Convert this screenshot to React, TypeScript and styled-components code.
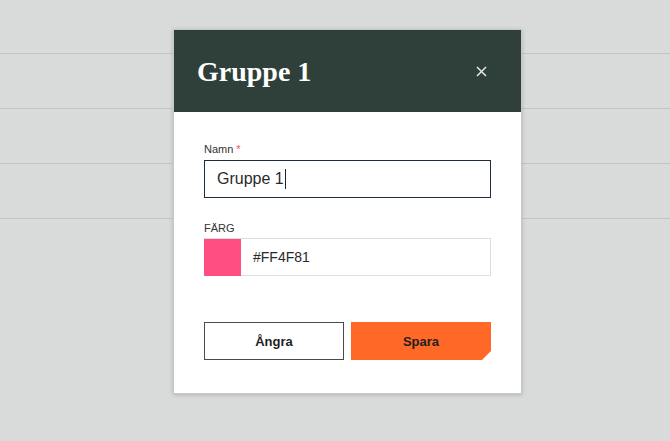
import React from "react";
import styled, { createGlobalStyle } from "styled-components";

const GlobalStyle = createGlobalStyle`
  html, body { margin: 0; padding: 0; }
  body {
    background: #d9dbda;
    font-family: "Liberation Sans", Arial, sans-serif;
    width: 670px;
    height: 441px;
    overflow: hidden;
  }
`;

const Page = styled.div`
  position: relative;
  width: 670px;
  height: 441px;
  background: #d9dbda;
`;

const List = styled.div`
  display: flex;
  flex-direction: column;
`;

const Row = styled.div<{ $first?: boolean }>`
  height: ${(p) => (p.$first ? 53 : 54)}px;
  border-bottom: 1px solid #c3c5c4;
`;

const Dialog = styled.div`
  position: absolute;
  left: 173px;
  top: 29px;
  width: 347px;
  background: #ffffff;
  border: 1px solid #c6c8c7;
  box-shadow: 0 1px 4px rgba(0, 0, 0, 0.18);
  display: flex;
  flex-direction: column;
`;

const Header = styled.div`
  height: 82px;
  background: #2f3f3a;
  display: flex;
  align-items: center;
  justify-content: space-between;
  padding: 0 32px 0 23px;
  box-sizing: border-box;
`;

const Title = styled.h2`
  margin: 0;
  font-family: "Liberation Serif", "Times New Roman", serif;
  font-size: 28px;
  font-weight: 700;
  color: #ffffff;
  letter-spacing: 0;
  margin-top: 2px;
`;

const CloseButton = styled.button`
  border: 0;
  background: transparent;
  padding: 0;
  width: 16px;
  height: 16px;
  display: flex;
  align-items: center;
  justify-content: center;
  cursor: pointer;
`;

const Body = styled.div`
  padding: 30px 30px 33px 30px;
  display: flex;
  flex-direction: column;
`;

const Field = styled.div<{ $mb: number }>`
  display: flex;
  flex-direction: column;
  margin-bottom: ${(p) => p.$mb}px;
`;

const Label = styled.label<{ $mb: number }>`
  font-size: 11px;
  line-height: 14px;
  color: #333;
  margin-bottom: ${(p) => p.$mb}px;
`;

const Required = styled.span`
  color: #f2555a;
  margin-left: 3px;
`;

const TextInput = styled.div`
  height: 38px;
  box-sizing: border-box;
  border: 1.5px solid #1d2c3c;
  display: flex;
  align-items: center;
  padding-left: 12px;
  font-size: 16px;
  color: #2a2a2a;
`;

const Caret = styled.span`
  display: inline-block;
  width: 1px;
  height: 20px;
  background: #222;
  margin-left: 1px;
`;

const ColorField = styled.div`
  height: 38px;
  box-sizing: border-box;
  border: 1px solid #dedede;
  display: flex;
  align-items: stretch;
`;

const Swatch = styled.div<{ $color: string }>`
  width: 37px;
  background: ${(p) => p.$color};
  margin: 0 0 -1px -1px;
`;

const ColorValue = styled.div`
  display: flex;
  align-items: center;
  padding-left: 12px;
  font-size: 14px;
  color: #2a2a2a;
`;

const Actions = styled.div`
  display: grid;
  grid-template-columns: 1fr 1fr;
  gap: 7px;
`;

const Button = styled.button<{ $primary?: boolean }>`
  height: 38px;
  box-sizing: border-box;
  font-family: "Liberation Sans", Arial, sans-serif;
  font-weight: 700;
  font-size: 13px;
  color: #1f1f1f;
  cursor: pointer;
  border: ${(p) => (p.$primary ? "0" : "1.5px solid #4a4a4a")};
  background: ${(p) => (p.$primary ? "#ff6827" : "#ffffff")};
  clip-path: ${(p) =>
    p.$primary
      ? "polygon(0 0, 100% 0, 100% calc(100% - 9px), calc(100% - 9px) 100%, 0 100%)"
      : "none"};
`;

export default function App() {
  return (
    <>
      <GlobalStyle />
      <Page>
        <List>
          <Row $first />
          <Row />
          <Row />
          <Row />
        </List>
        <Dialog>
          <Header>
            <Title>Gruppe 1</Title>
            <CloseButton aria-label="Stäng">
              <svg width="11" height="11" viewBox="0 0 11 11">
                <path d="M1 1 L10 10 M10 1 L1 10" stroke="#e6e9e8" strokeWidth="1.5" />
              </svg>
            </CloseButton>
          </Header>
          <Body>
            <Field $mb={23}>
              <Label $mb={4}>
                Namn<Required>*</Required>
              </Label>
              <TextInput>
                Gruppe 1<Caret />
              </TextInput>
            </Field>
            <Field $mb={46}>
              <Label $mb={3}>FÄRG</Label>
              <ColorField>
                <Swatch $color="#FF4F81" />
                <ColorValue>#FF4F81</ColorValue>
              </ColorField>
            </Field>
            <Actions>
              <Button>Ångra</Button>
              <Button $primary>Spara</Button>
            </Actions>
          </Body>
        </Dialog>
      </Page>
    </>
  );
}
